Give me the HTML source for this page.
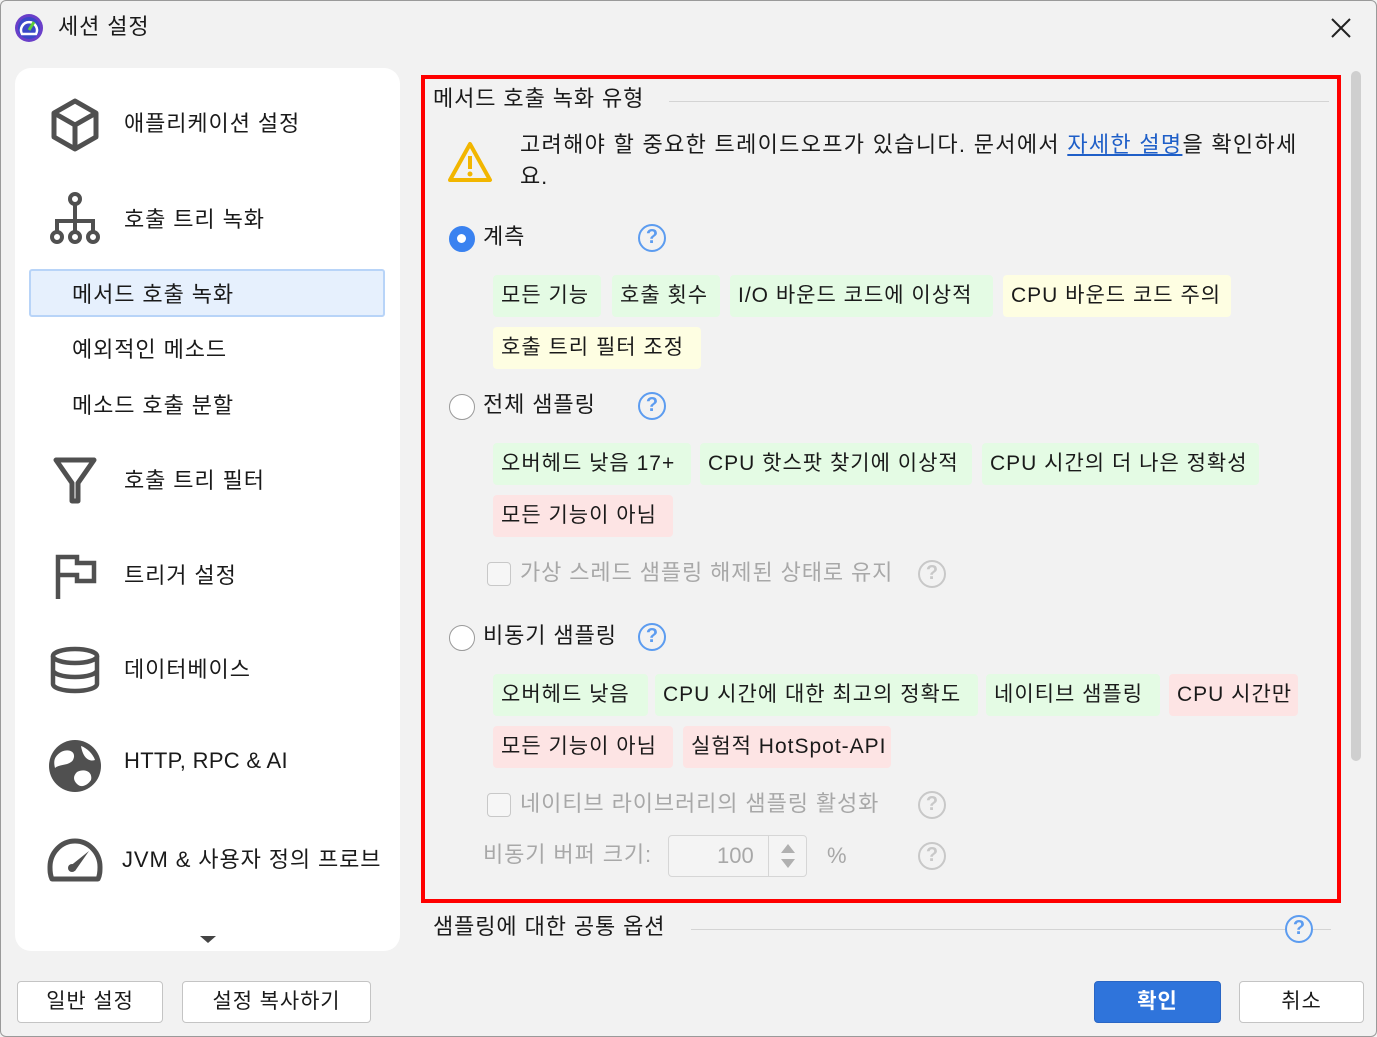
<!DOCTYPE html>
<html><head><meta charset="utf-8"><style>
*{box-sizing:border-box;margin:0;padding:0}
body{width:1377px;height:1037px;background:#f2f2f2;font-family:"Liberation Sans","Noto Sans CJK KR",sans-serif;color:#1a1a1a;position:relative;overflow:hidden;border:1px solid #9a9a9a;border-radius:6px;letter-spacing:0.9px}
.a{position:absolute;white-space:nowrap}
.t{font-size:22px;line-height:30px}
.chip{position:absolute;height:42px;border-radius:4px;font-size:21px;line-height:42px;padding-left:8px;white-space:nowrap;letter-spacing:1px}
.g{background:#e4fbe4}.y{background:#fefee2}.r{background:#fde4e4}
.q{position:absolute;width:28px;height:28px;border-radius:50%;border:2.5px solid #5c9cf0;color:#5c9cf0;font-size:20px;line-height:23px;text-align:center;font-weight:bold;letter-spacing:0}
.qd{border-color:#c8c8c8;color:#c8c8c8}
.rad{position:absolute;width:26px;height:26px;border-radius:50%;border:1.5px solid #9a9a9a;background:#fff}
.cb{position:absolute;width:24px;height:24px;border-radius:4px;border:1.5px solid #c8c8c8;background:#f6f6f6}
.gray{color:#a8a8a8}
.btn{position:absolute;height:42px;border:1.5px solid #c4c4c4;border-radius:4px;background:#fff;font-size:21px;line-height:39px;text-align:center}
.side{font-size:22px}
</style></head><body>
<svg class="a" style="left:13px;top:12px" width="30" height="30" viewBox="0 0 30 30"><circle cx="15" cy="15" r="14" fill="#6a3fc9"/><circle cx="15" cy="15" r="11" fill="#3a48c8"/><path d="M8 21 A8 8 0 1 1 22 21 Z" fill="none" stroke="#fff" stroke-width="2.5"/><path d="M15 17 L20 9" stroke="#5ccf3a" stroke-width="3"/></svg>
<div class="a t" style="left:57px;top:11px">세션 설정</div>
<svg class="a" style="left:1328px;top:15px" width="24" height="24"><path d="M3 3L21 21M21 3L3 21" stroke="#222" stroke-width="2"/></svg>

<div class="a" style="left:14px;top:67px;width:385px;height:883px;background:#fff;border-radius:16px"></div>
<svg class="a" style="left:48px;top:96px" width="52" height="56" viewBox="0 0 52 56"><path d="M26 4L47 16V40L26 52L5 40V16Z M5 16L26 28L47 16 M26 28V52" fill="none" stroke="#505050" stroke-width="5" stroke-linejoin="round"/></svg>
<div class="a side" style="left:123px;top:105px">애플리케이션 설정</div>
<svg class="a" style="left:46px;top:190px" width="56" height="56" viewBox="0 0 56 56"><circle cx="28" cy="8" r="5" fill="none" stroke="#505050" stroke-width="4"/><path d="M28 13V28M10 41V30H46V41M28 28V41" fill="none" stroke="#505050" stroke-width="4"/><circle cx="10" cy="46" r="5" fill="none" stroke="#505050" stroke-width="4"/><circle cx="28" cy="46" r="5" fill="none" stroke="#505050" stroke-width="4"/><circle cx="46" cy="46" r="5" fill="none" stroke="#505050" stroke-width="4"/></svg>
<div class="a side" style="left:123px;top:201px">호출 트리 녹화</div>
<div class="a" style="left:28px;top:268px;width:356px;height:48px;background:#e6f0fd;border:2px solid #b8d4f8;border-radius:3px"></div>
<div class="a side" style="left:71px;top:276px">메서드 호출 녹화</div>
<div class="a side" style="left:71px;top:331px">예외적인 메소드</div>
<div class="a side" style="left:71px;top:387px">메소드 호출 분할</div>
<svg class="a" style="left:52px;top:456px" width="44" height="48" viewBox="0 0 44 48"><path d="M3 3H41L25 26V44H19V26Z" fill="none" stroke="#505050" stroke-width="5" stroke-linejoin="round"/></svg>
<div class="a side" style="left:123px;top:462px">호출 트리 필터</div>
<svg class="a" style="left:54px;top:552px" width="44" height="48" viewBox="0 0 44 48"><path d="M3 46V4H22V10H39V28H22V22H3" fill="none" stroke="#505050" stroke-width="4.5"/></svg>
<div class="a side" style="left:123px;top:557px">트리거 설정</div>
<svg class="a" style="left:48px;top:645px" width="52" height="48" viewBox="0 0 52 48"><ellipse cx="26" cy="10" rx="22" ry="7" fill="none" stroke="#505050" stroke-width="4.5"/><path d="M4 10V38C4 42 14 45 26 45S48 42 48 38V10M4 24C4 28 14 31 26 31S48 28 48 24" fill="none" stroke="#505050" stroke-width="4.5"/></svg>
<div class="a side" style="left:123px;top:651px">데이터베이스</div>
<svg class="a" style="left:46px;top:737px" width="56" height="56" viewBox="0 0 56 56"><circle cx="28" cy="28" r="26" fill="#505050"/><path d="M14 14C22 10 30 14 26 22C22 28 12 26 8 30C6 22 8 18 14 14Z M30 34C38 30 46 34 44 42C40 48 34 50 30 46C26 42 26 38 30 34Z M34 8C40 10 46 16 48 22C42 24 36 20 34 8Z" fill="#fff"/></svg>
<div class="a side" style="left:123px;top:747px;letter-spacing:0.3px">HTTP, RPC &amp; AI</div>
<svg class="a" style="left:46px;top:834px" width="56" height="48" viewBox="0 0 56 48"><path d="M5 44C3 40 3 36 3 32C3 18 14 6 28 6S53 18 53 32C53 36 53 40 51 44Z" fill="none" stroke="#505050" stroke-width="5" stroke-linejoin="round"/><path d="M22 32L42 16L28 36Z" fill="#505050"/><circle cx="25" cy="33" r="4" fill="#505050"/></svg>
<div class="a side" style="left:121px;top:841px">JVM &amp; 사용자 정의 프로브</div>
<svg class="a" style="left:197px;top:933px" width="20" height="10"><path d="M2 2H18L10 9Z" fill="#444"/></svg>

<div class="a t" style="left:432px;top:83px">메서드 호출 녹화 유형</div>
<div class="a" style="left:668px;top:100px;width:660px;height:1px;background:#d4d4d4"></div>
<svg class="a" style="left:446px;top:140px" width="46" height="42" viewBox="0 0 46 42"><path d="M23 3L43 39H3Z" fill="none" stroke="#f2b600" stroke-width="4" stroke-linejoin="round"/><path d="M23 15V28" stroke="#f2b600" stroke-width="4"/><circle cx="23" cy="33" r="2.5" fill="#f2b600"/></svg>
<div class="a t" style="left:519px;top:129px;letter-spacing:1.3px">고려해야 할 중요한 트레이드오프가 있습니다. 문서에서 <span style="color:#1f5fc8;text-decoration:underline">자세한 설명</span>을 확인하세</div>
<div class="a t" style="left:519px;top:161px">요.</div>

<div class="rad" style="left:448px;top:225px;background:#3a82f0;border-color:#3a82f0"><div style="position:absolute;left:7px;top:7px;width:9px;height:9px;border-radius:50%;background:#fff"></div></div>
<div class="a t" style="left:482px;top:221px">계측</div>
<div class="q" style="left:637px;top:223px">?</div>
<div class="chip g" style="left:492px;top:274px;width:108px">모든 기능</div>
<div class="chip g" style="left:611px;top:274px;width:108px">호출 횟수</div>
<div class="chip g" style="left:729px;top:274px;width:263px">I/O 바운드 코드에 이상적</div>
<div class="chip y" style="left:1002px;top:274px;width:228px">CPU 바운드 코드 주의</div>
<div class="chip y" style="left:492px;top:326px;width:208px">호출 트리 필터 조정</div>

<div class="rad" style="left:448px;top:393px"></div>
<div class="a t" style="left:482px;top:389px">전체 샘플링</div>
<div class="q" style="left:637px;top:391px">?</div>
<div class="chip g" style="left:492px;top:442px;width:198px">오버헤드 낮음 17+</div>
<div class="chip g" style="left:699px;top:442px;width:272px">CPU 핫스팟 찾기에 이상적</div>
<div class="chip g" style="left:981px;top:442px;width:277px">CPU 시간의 더 나은 정확성</div>
<div class="chip r" style="left:492px;top:494px;width:180px">모든 기능이 아님</div>
<div class="cb" style="left:486px;top:561px"></div>
<div class="a t gray" style="left:519px;top:557px">가상 스레드 샘플링 해제된 상태로 유지</div>
<div class="q qd" style="left:917px;top:559px">?</div>

<div class="rad" style="left:448px;top:624px"></div>
<div class="a t" style="left:482px;top:620px">비동기 샘플링</div>
<div class="q" style="left:637px;top:622px">?</div>
<div class="chip g" style="left:492px;top:673px;width:155px">오버헤드 낮음</div>
<div class="chip g" style="left:654px;top:673px;width:323px">CPU 시간에 대한 최고의 정확도</div>
<div class="chip g" style="left:985px;top:673px;width:174px">네이티브 샘플링</div>
<div class="chip r" style="left:1168px;top:673px;width:129px">CPU 시간만</div>
<div class="chip r" style="left:492px;top:725px;width:180px">모든 기능이 아님</div>
<div class="chip r" style="left:682px;top:725px;width:208px">실험적 HotSpot-API</div>
<div class="cb" style="left:486px;top:792px"></div>
<div class="a t gray" style="left:519px;top:788px">네이티브 라이브러리의 샘플링 활성화</div>
<div class="q qd" style="left:917px;top:790px">?</div>
<div class="a t gray" style="left:482px;top:839px">비동기 버퍼 크기:</div>
<div class="a" style="left:667px;top:834px;width:139px;height:42px;border:1.5px solid #d6d6d6;border-radius:4px;background:#f4f4f4"></div>
<div class="a" style="left:767px;top:835px;width:1px;height:40px;background:#d6d6d6"></div>
<div class="a t gray" style="left:716px;top:840px;letter-spacing:0">100</div>
<svg class="a" style="left:777px;top:840px" width="20" height="30"><path d="M3 12L10 3L17 12Z M3 18L10 27L17 18Z" fill="#b0b0b0"/></svg>
<div class="a t gray" style="left:826px;top:840px">%</div>
<div class="q qd" style="left:917px;top:841px">?</div>

<div class="a" style="left:420px;top:74px;width:920px;height:828px;border:4px solid #f00"></div>
<div class="a" style="left:1350px;top:70px;width:10px;height:690px;background:#cfcfcf;border-radius:5px"></div>

<div class="a t" style="left:432px;top:911px">샘플링에 대한 공통 옵션</div>
<div class="a" style="left:690px;top:928px;width:640px;height:1px;background:#d4d4d4"></div>
<div class="q" style="left:1284px;top:914px;background:#f2f2f2">?</div>

<div class="btn" style="left:16px;top:980px;width:146px">일반 설정</div>
<div class="btn" style="left:181px;top:980px;width:189px">설정 복사하기</div>
<div class="btn" style="left:1093px;top:980px;width:127px;background:#2f74db;border-color:#2a66c4;color:#fff;font-weight:bold">확인</div>
<div class="btn" style="left:1238px;top:980px;width:125px">취소</div>
</body></html>
